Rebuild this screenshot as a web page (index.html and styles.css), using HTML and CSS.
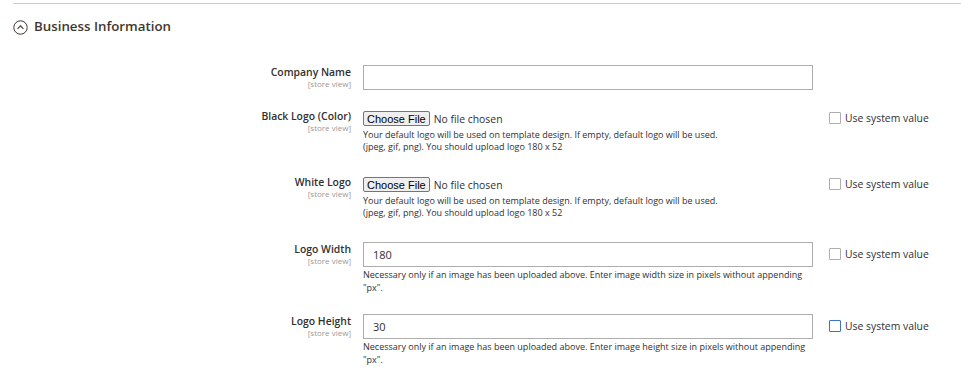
FILE: index.html
```html
<!DOCTYPE html>
<html lang="en">
<head>
  <meta charset="UTF-8" />
  <meta name="viewport" content="width=device-width, initial-scale=1.0" />
  <title>Business Information</title>
  <link rel="stylesheet" href="styles.css">
</head>
<body>
  <div class="section">
    <div class="section-title">
      <svg class="toggle" width="15" height="15" viewBox="0 0 15 15">
        <circle cx="7.5" cy="7.5" r="6.7" fill="none" stroke="#41362f" stroke-width="1" />
        <path d="M4.6 8.8 L7.5 5.9 L10.4 8.8" fill="none" stroke="#41362f" stroke-width="1.1" />
      </svg>
      <span>Business Information</span>
    </div>

    <div class="fields">
      <div class="row row-name">
        <div class="label">
          <span>Company Name</span>
          <small>[store view]</small>
        </div>
        <div class="control">
          <input class="text" type="text" value="" />
        </div>
        <div class="use-default"></div>
      </div>

      <div class="row row-logo">
        <div class="label">
          <span>Black Logo (Color)</span>
          <small>[store view]</small>
        </div>
        <div class="control">
          <input class="file" type="file" />
          <p class="note">Your default logo will be used on template design. If empty, default logo will be used.<br>(jpeg, gif, png). You should upload logo 180 x 52</p>
        </div>
        <label class="use-default"><span class="check"></span>Use system value</label>
      </div>

      <div class="row row-logo">
        <div class="label">
          <span>White Logo</span>
          <small>[store view]</small>
        </div>
        <div class="control">
          <input class="file" type="file" />
          <p class="note">Your default logo will be used on template design. If empty, default logo will be used.<br>(jpeg, gif, png). You should upload logo 180 x 52</p>
        </div>
        <label class="use-default"><span class="check"></span>Use system value</label>
      </div>

      <div class="row row-size">
        <div class="label">
          <span>Logo Width</span>
          <small>[store view]</small>
        </div>
        <div class="control">
          <input class="text" type="text" value="180" />
          <p class="note">Necessary only if an image has been uploaded above. Enter image width size in pixels without appending "px".</p>
        </div>
        <label class="use-default"><span class="check"></span>Use system value</label>
      </div>

      <div class="row row-size">
        <div class="label">
          <span>Logo Height</span>
          <small>[store view]</small>
        </div>
        <div class="control">
          <input class="text" type="text" value="30" />
          <p class="note">Necessary only if an image has been uploaded above. Enter image height size in pixels without appending "px".</p>
        </div>
        <label class="use-default"><span class="check active"></span>Use system value</label>
      </div>
    </div>
  </div>
</body>
</html>
```

FILE: styles.css
```css
body {
  margin: 0;
  padding: 0;
  background-color: #fff;
  color: #303030;
  font-family: "Open Sans", Arial, sans-serif;
}

.section {
  padding: 3px 0 0 13px;
}

.section-title {
  display: flex;
  align-items: center;
  gap: 6px;
  border-top: 1px solid #cccccc;
  padding: 11px 0 0;
  height: 22px;
  color: #41362f;
  font-size: 13.3px;
  font-weight: 600;
}

.toggle {
  display: block;
  margin-top: 2px;
}

.fields {
  padding-top: 28px;
}

.row {
  display: grid;
  grid-template-columns: 338px 450px auto;
  column-gap: 12px;
  align-items: start;
}

.row-name {
  margin-bottom: 20px;
}

.row-logo {
  margin-bottom: 23px;
}

.row-size {
  margin-bottom: 20px;
}

.label {
  text-align: right;
  display: flex;
  flex-direction: column;
  font-size: 10.4px;
  font-weight: 600;
  line-height: 13px;
}

.row-name .label,
.row-size .label {
  padding-top: 1px;
}

.label small {
  color: #999;
  font-size: 8px;
  font-weight: 400;
  line-height: 9px;
}

.text {
  box-sizing: border-box;
  display: block;
  width: 450px;
  height: 25px;
  margin: 0;
  padding: 0 9px;
  border: 1px solid #adadad;
  border-radius: 0;
  font-family: "Open Sans", Arial, sans-serif;
  font-size: 11px;
  color: #303030;
  outline: none;
}

.file {
  display: block;
  margin: 1px 0 0;
  font-family: "Open Sans", Arial, sans-serif;
  font-size: 10.4px;
  color: #303030;
}

.file::file-selector-button {
  font-family: "Liberation Sans", Arial, sans-serif;
  font-size: 11px;
  margin-right: 4px;
  padding: 0 3px;
  height: 15px;
  border: 1px solid #767676;
  border-radius: 2px;
  background-color: #efefef;
  color: #000;
}

.note {
  margin: 3px 0 0;
  font-size: 9px;
  line-height: 12px;
  color: #303030;
}

.row-size .note {
  margin-top: 2px;
  line-height: 12.5px;
}

.use-default {
  display: flex;
  align-items: center;
  gap: 4px;
  margin-left: 4px;
  font-size: 10.4px;
  line-height: 14px;
  color: #303030;
  padding-top: 1px;
}

.row-size .use-default {
  padding-top: 5px;
}

.check {
  box-sizing: border-box;
  width: 12px;
  height: 12px;
  border: 1px solid #adadad;
  border-radius: 1px;
}

.check.active {
  border-color: #3774c7;
}
```
